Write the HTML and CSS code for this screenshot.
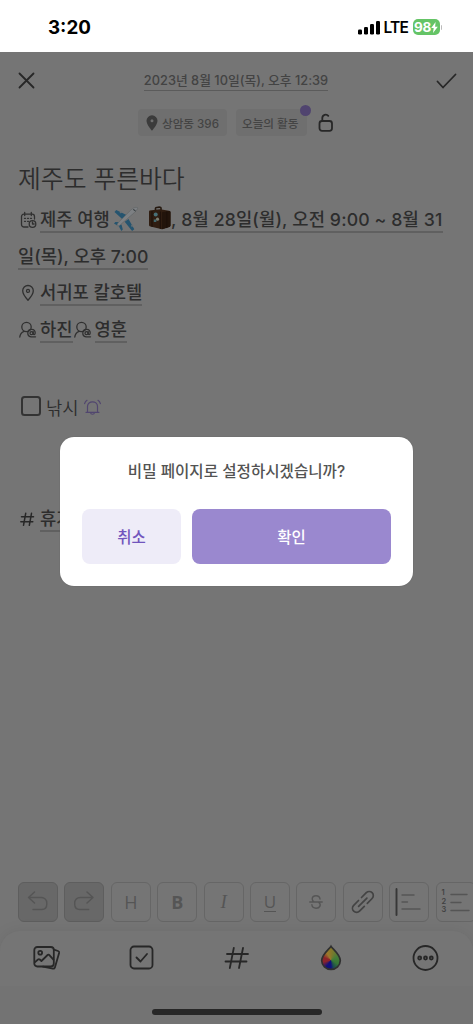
FILE: index.html
```html
<!DOCTYPE html>
<html lang="ko">
<head>
<meta charset="utf-8">
<title>제주도 푸른바다</title>
<link rel="stylesheet" href="styles.css">
</head>
<body>
<div class="phone">
  <header class="status">
    <span class="clock">3:20</span>
    <div class="signals">
      <svg class="bars" width="22" height="15" viewBox="0 0 22 15"><rect x="0" y="9.5" width="4" height="5" rx="1.2"/><rect x="6" y="7" width="4" height="7.5" rx="1.2"/><rect x="12" y="4" width="4" height="10.500" rx="1.2"/><rect x="18" y="1" width="4" height="13.500" rx="1.2"/></svg>
      <span class="lte">LTE</span>
      <span class="battery">98<svg width="7" height="11" viewBox="0 0 7 11"><path d="M4.600 0 0.200 6h2.500L2 11l4.800-6.300H4.100z" fill="#fff"/></svg></span>
      <i class="nub"></i>
    </div>
  </header>

  <main class="page">
    <div class="topbar">
      <svg width="17" height="17" viewBox="0 0 17 17" class="ln"><path d="M1.500 1.500l14 14M15.500 1.500l-14 14"/></svg>
      <span class="date">2023년 8월 10일(목), 오후 12:39</span>
      <svg width="21" height="16" viewBox="0 0 21 16" class="ln"><path d="M2.500 8.500l5.500 6L20.500 1.500"/></svg>
    </div>
    <div class="tags">
      <span class="tag place"><svg width="12" height="16" viewBox="0 0 12 16"><path fill-rule="evenodd" d="M6 .3A5.500 5.500 0 0 0 .5 5.800C.5 9.800 6 15.700 6 15.700s5.500-5.900 5.500-9.900A5.500 5.500 0 0 0 6 .3zm0 3.900a1.500 1.500 0 1 1 0 3 1.500 1.500 0 0 1 0-3z" fill="#3b3b3b"/></svg><b>상암동 396</b></span>
      <span class="tag today"><b>오늘의 활동</b><i class="dot"></i></span>
      <svg class="lock ln" width="16" height="19" viewBox="0 0 16 19"><rect x="1.500" y="8" width="12.500" height="9.800" rx="2.500"/><path d="M4.300 8V5a3.400 3.400 0 0 1 6-2.200"/></svg>
    </div>

    <h1 class="title">제주도 푸른바다</h1>

    <div class="row">
      <svg class="ico ln thin" width="17" height="18" viewBox="0 0 17 18"><path d="M8 16H4a2.500 2.500 0 0 1-2.500-2.500v-8A2.300 2.300 0 0 1 3.800 3.200h8.400a2.300 2.300 0 0 1 2.300 2.300V8M4.700 1.500v3M11.300 1.500v3M4.500 7.300h1M7.500 7.300h1M10.500 7.300h1M4.500 10.300h1M7.500 10.300h1"/><circle cx="12.500" cy="13" r="3.300"/><path d="M12.500 11v2h1.600"/></svg>
      <span class="link first"><span class="trip">제주 여행</span><svg class="plane" width="24" height="24" viewBox="0 0 24 24"><path fill="#25546f" d="M13.500 8.500 2.200 3 .5 5.100l8.500 7.600zM14.500 12l5.800 10.300-2.200 1.700-7.400-9.300zM6.500 15.300 1.400 15 0 16.600l5.100 3zM7.500 17.600l1.300 5-1.400 1.400-3-5.500z"/><path fill="#7d8083" stroke="#5b5f61" stroke-width=".5" d="M23.500.6c-1.900-.9-4.600.4-6.600 2.400L4.600 15.200c-1.300 1.500-1.900 3-1.400 3.500.6.600 2.300 0 3.700-1.400L20.400 5.600c2.200-2 3.700-4.100 3.100-5z"/><path fill="#343a3d" d="m19.800 2 2.200 2-.6.6-2.500-1.900z"/><path fill="#6b7174" d="M5.500 5.300 7 4l1.400 1-1.600 1.500zM17 18.500l1.500-1.300.8 1.500-1.500 1.500z"/></svg><svg class="bag" width="23" height="24" viewBox="0 0 23 24"><path d="M7.500 5V2.200c0-1 5.500-1.600 5.500-.3V4" fill="none" stroke="#251910" stroke-width="1.600"/><path fill="#2f1d11" d="M1.500 4.500 12 3.200l9 1.600c1 .2 1.500.7 1.500 1.500v13c0 .8-.4 1.300-1.300 1.700L14 23.300 2.500 20.500c-1-.2-1.500-.7-1.500-1.700V5.500z"/><path fill="#22140b" d="M14 6.300 21.500 5c.7.200 1 .7 1 1.300v13c0 .8-.4 1.300-1.300 1.700L14 23.300z"/><path fill="#1c1009" d="M3.500 5h1v16l-1-.3zM11.800 5.500h1v17.500l-1-.3zM18.300 5.500l1-.3v16.500l-1 .5z"/><circle cx="7.700" cy="8.500" r="2" fill="#487077"/><circle cx="9.500" cy="13.200" r="1.600" fill="#7b7d70"/><path fill="#3f666c" d="M5.800 13.500h2.500V16H5.800z"/></svg><span class="when">, 8월 28일(월), 오전 9:00 ~ 8월 31</span></span>
    </div>
    <div class="row wrap"><span class="link second">일(목), 오후 7:00</span></div>
    <div class="row">
      <svg class="ico ln thin" width="17" height="18" viewBox="0 0 17 18"><path d="M8 1.500A5.300 5.300 0 0 0 2.700 6.800C2.700 10.500 8 16.200 8 16.200s5.300-5.700 5.300-9.400A5.300 5.300 0 0 0 8 1.500z"/><circle cx="8" cy="6.900" r="1.500"/></svg>
      <span class="link">서귀포 칼호텔</span>
    </div>
    <div class="row people">
      <svg class="ico person ln thin" width="18" height="18" viewBox="0 0 18 18"><circle cx="7.500" cy="6" r="4.700"/><path d="M.8 16c.2-2.700 1.700-4.700 4.300-5.700"/><path d="M16.500 15.800H12a3.700 3.700 0 1 1 4.200-3.700c0 1.900-2 1.900-2 .3v-1.800"/><circle cx="12.500" cy="12.200" r="1.500"/></svg>
      <span class="link">하진</span>
      <svg class="ico person ln thin" width="18" height="18" viewBox="0 0 18 18"><circle cx="7.500" cy="6" r="4.700"/><path d="M.8 16c.2-2.700 1.700-4.700 4.300-5.700"/><path d="M16.500 15.800H12a3.700 3.700 0 1 1 4.200-3.700c0 1.900-2 1.900-2 .3v-1.800"/><circle cx="12.500" cy="12.200" r="1.500"/></svg>
      <span class="link">영훈</span>
    </div>

    <div class="todo">
      <i class="check"></i><span>낚시</span>
      <svg class="bell" width="17" height="17" viewBox="0 0 17 17"><path d="M2 13.300h13M3.500 13V7.500c0-6.300 10-6.300 10 0V13M6.500 13.500c.3 2.300 3.700 2.300 4 0M3 1.300C1.800 2 1 3.200.6 4.700M14 1.300c1.200.7 2 1.900 2.400 3.400"/></svg>
    </div>

    <div class="hashrow">
      <svg class="ln" width="15" height="15" viewBox="0 0 15 15"><path d="M5.700 1.300 3.500 13.300M11.500 1.300 9.300 13.300M1.500 4.800h12M.8 9.800h12"/></svg>
      <span class="link">휴가</span>
    </div>
  </main>

  <div class="format">
    <span class="key off"><svg width="24" height="24" viewBox="0 0 24 24"><path d="M8.500 2 2.500 7.500l6 5.500M2.800 7.500h12.500a5.500 5.500 0 0 1 5.500 5.500v1c0 3.500-2 5.500-5 5.500H7"/></svg></span>
    <span class="key off"><svg width="24" height="24" viewBox="0 0 24 24"><path d="m15 2 6 5.500-6 5.500M20.700 7.500H8.200A5.500 5.500 0 0 0 2.700 13v1c0 3.500 2 5.500 5 5.500h9"/></svg></span>
    <span class="key"><span class="h">H</span></span>
    <span class="key"><span class="b">B</span></span>
    <span class="key"><span class="i">I</span></span>
    <span class="key"><span class="u">U</span></span>
    <span class="key"><svg width="14" height="14" viewBox="0 0 14 14"><path d="M11 4C10.800 1.800 9.200.8 7 .8S3.200 2 3.200 4c0 1.400.7 2.300 2 3M.8 7h12.400M9.800 7.500c2.700 2 1.200 5.700-2.600 5.700-2.500 0-4.200-1.200-4.300-3.400"/></svg></span>
    <span class="key"><svg class="dark" width="24" height="24" viewBox="0 0 24 24"><path d="m7.600 16.400 8.300-8.300M10.500 7.500l4.800-4.800a4.100 4.100 0 0 1 5.800 5.800l-4.800 4.800M7.500 10.500l-4.800 4.800a4.100 4.100 0 0 0 5.800 5.800l4.800-4.800"/></svg></span>
    <span class="key"><svg class="rule" width="28" height="28" viewBox="0 0 28 28"><path class="bar" d="M1.500 1v26"/><path d="M7 7h12M7 14h5.500M7 21h18"/></svg></span>
    <span class="key"><span class="nums">1<br>2<br>3</span><svg width="20" height="20" viewBox="0 0 20 20"><path d="M1 2.500h16M1 10.500h10M1 18.500h18"/></svg></span>
  </div>

  <nav class="tools">
    <span class="tool"><svg class="ln" width="28" height="26" viewBox="0 0 28 26"><rect x="1.300" y="2" width="19.500" height="19.500" rx="3"/><circle cx="7.200" cy="7.700" r="1.900"/><path d="m2 17.200 3-2.700c.6-.5 1.200-.5 1.800 0l1.600 1.500 6.200-6c.5-.5 1.300-.4 1.800.1l4 4.600M21 4.700l4 1.300c.9.300 1.300 1 1.100 1.900l-4.200 14.500c-.3.900-1 1.400-2 1.200L10 21.700"/></svg></span>
    <span class="tool"><svg class="ln" width="26" height="26" viewBox="0 0 26 26"><rect x="1.500" y="1.500" width="22" height="22" rx="3.500"/><path d="m7.500 12.500 4 4L18 9"/></svg></span>
    <span class="tool"><svg class="ln" width="26" height="24" viewBox="0 0 26 24"><path d="M9.800 2 5.800 22M19 2l-4 20M3 8h21M1.500 15.500h21"/></svg></span>
    <span class="tool"><svg width="22" height="26" viewBox="0 0 22 26">
      <defs><clipPath id="dropShape"><path d="M11 1.300C9.500 4 1.700 9.500 1.700 15.600a9.300 8.800 0 0 0 18.600 0C20.300 9.500 12.500 4 11 1.300z"/></clipPath></defs>
      <foreignObject width="22" height="26" clip-path="url(#dropShape)"><div class="wheel"></div></foreignObject>
      <path class="edge" d="M11 1.300C9.500 4 1.700 9.500 1.700 15.600a9.300 8.800 0 0 0 18.600 0C20.300 9.500 12.500 4 11 1.300z"/></svg></span>
    <span class="tool"><svg class="ln" width="28" height="28" viewBox="0 0 28 28"><circle cx="13.500" cy="14" r="12"/><circle cx="7.700" cy="14" r="1.500"/><circle cx="13.500" cy="14" r="1.500"/><circle cx="19.300" cy="14" r="1.500"/></svg></span>
  </nav>
  <footer class="home"><i></i></footer>

  <div class="dialog">
    <p>비밀 페이지로 설정하시겠습니까?</p>
    <div class="actions"><button class="cancel">취소</button><button class="ok">확인</button></div>
  </div>
</div>
</body>
</html>
```
FILE: styles.css
```css
* { box-sizing: border-box; }
body { margin: 0; font-family: Inter, "Noto Sans CJK KR", sans-serif; }
.phone { position: relative; width: 473px; height: 1024px; overflow: hidden; background: #757575; color: #2d2d2d; display: flex; flex-direction: column; }
svg { display: block; flex: none; overflow: visible; }
.ln { fill: none; stroke: #272727; stroke-width: 1.8; stroke-linecap: round; stroke-linejoin: round; }
.ln.thin { stroke-width: 1.3; stroke: #303030; }

.status { height: 52px; flex: none; background: #fff; color: #000; display: flex; justify-content: space-between; align-items: center; padding: 2px 31px 0 48px; }
.clock { font-size: 18.800px; font-weight: 700; }
.signals { display: flex; align-items: center; }
.lte { font-size: 15.500px; font-weight: 600; margin-left: 4px; letter-spacing: -.8px; width: 29px; }
.battery { width: 27px; height: 16px; border-radius: 5px; background: #65c466; color: #fff; font-size: 13.500px; font-weight: 700; line-height: 16px; display: flex; align-items: center; justify-content: center; letter-spacing: -.3px; }
.nub { width: 1.500px; height: 5px; border-radius: 0 2px 2px 0; background: #bbb; margin-left: 1px; }

.page { height: 821px; flex: none; padding: 0 17px 0 18px; }
.topbar { display: flex; align-items: center; justify-content: space-between; height: 57px; }
.date { font-size: 12.800px; font-weight: 500; color: #434343; line-height: 19px; border-bottom: 1px solid #5b5b5b; white-space: nowrap; margin-left: 2px; }
.tags { display: flex; align-items: center; height: 27px; gap: 9px; padding-left: 120px; }
.tag { position: relative; height: 27px; border-radius: 4px; background: #6f6f6f; color: #444; font-size: 11.600px; display: flex; align-items: center; white-space: nowrap; }
.tag b { font-weight: 500; padding-top: 1px; }
.place { width: 89px; padding-left: 8px; gap: 4px; }
.today { width: 71px; padding-left: 6px; }
.dot { position: absolute; right: -3.500px; top: -4px; width: 11px; height: 11px; border-radius: 50%; background: #50446f; }
.lock { margin-left: 2px; }
.title { margin: 24px 0 0; font-size: 24.800px; line-height: 38px; height: 39px; font-weight: 350; white-space: nowrap; }

.row { display: flex; align-items: flex-start; height: 36.500px; padding-top: 6px; }
.ico { width: 17px; margin: 6px 3px 0 2px; }
.link { height: 28px; line-height: 29px; border-bottom: 2px solid #606060; font-size: 17.700px; font-weight: 500; white-space: nowrap; }
.first { display: flex; width: 403px; }
.trip { width: 74px; }
.plane { margin-top: 2px; }
.bag { margin: 1px 0 0 10px; }
.when { letter-spacing: .13px; }
.people .person { width: 18px; margin-left: 1px; }
.todo { display: flex; align-items: center; height: 30px; margin-top: 46px; font-size: 17.700px; font-weight: 350; padding-left: 3px; }
.check { width: 20px; height: 20px; border: 2px solid #333; border-radius: 3.500px; margin-right: 5px; }
.todo span { padding-top: 1px; }
.bell { margin: 2px 0 0 5px; fill: none; stroke: #51466f; stroke-width: 1.2; stroke-linecap: round; }
.hashrow { display: flex; align-items: flex-start; margin-top: 82.500px; gap: 5px; padding-left: 2px; }
.hashrow .ln { margin-top: 8px; stroke-width: 1.5; }

.format { display: flex; gap: 6.400px; height: 58px; flex: none; padding: 9px 0 0 18px; }
.key { width: 40px; height: 40px; flex: none; border: 1px solid #666; border-radius: 6px; display: flex; align-items: center; justify-content: center; color: #555; }
.key svg { fill: none; stroke: #555; stroke-width: 1.4; stroke-linecap: round; stroke-linejoin: round; }
.key .dark { stroke: #434343; stroke-width: 1.7; }
.off { background: #686868; border-color: #5e5e5e; }
.key .rule .bar { stroke: #373737; stroke-width: 1.9; }
.h { font-size: 18px; font-family: "Open Sans", sans-serif; }
.b { font-size: 18px; font-weight: 700; font-family: "Open Sans", sans-serif; }
.i { font: italic 19px "Liberation Serif", serif; }
.u { font: 17px/18px "Open Sans", sans-serif; border-bottom: 1px solid #555; }
.nums { font-size: 7.500px; line-height: 8.500px; font-weight: 600; width: 6px; margin: 0 2px 0 0; color: #414141; }

.tools { height: 55px; flex: none; border-radius: 20px 20px 0 0; background: #757575; box-shadow: 0 0 15px rgba(0,0,0,.07); display: grid; grid-template-columns: repeat(5, 94.700px); padding-bottom: 2px; }
.tool { display: flex; align-items: center; justify-content: center; }
.tool svg { stroke-width: 1.8; }
.wheel { width: 22px; height: 26px; background: conic-gradient(from 0deg at 50% 58%, #87782a, #477d38 60deg, #367536 120deg, #1b4a50 160deg, #11117b 180deg, #11117b 215deg, #8b242b 255deg, #8b242b 290deg, #9b782c 330deg, #87782a); }
.tool .edge { fill: none; stroke: #303030; stroke-width: 1.7; }
.home { flex: 1; display: flex; justify-content: center; padding-top: 23px; background: #737373; }
.home i { width: 170px; height: 6px; border-radius: 3px; background: #272727; }

.dialog { position: absolute; left: 60px; top: 437px; width: 353px; height: 149px; padding: 21px 22px 22px; border-radius: 14px; background: #fff; box-shadow: 0 0 1px #555; }
.dialog p { margin: 0; height: 51px; line-height: 28px; text-align: center; font-size: 15.600px; font-weight: 500; color: #535353; white-space: nowrap; }
.actions { display: grid; grid-template-columns: 99px 199px; gap: 11px; }
.actions button { height: 55px; border: 0; border-radius: 8px; padding: 0 0 1px; font: 500 15.500px Inter, "Noto Sans CJK KR", sans-serif; }
.actions .cancel { background: #eeecf8; color: #7155bd; }
.actions .ok { background: #9a88cf; color: #fff; }
```
